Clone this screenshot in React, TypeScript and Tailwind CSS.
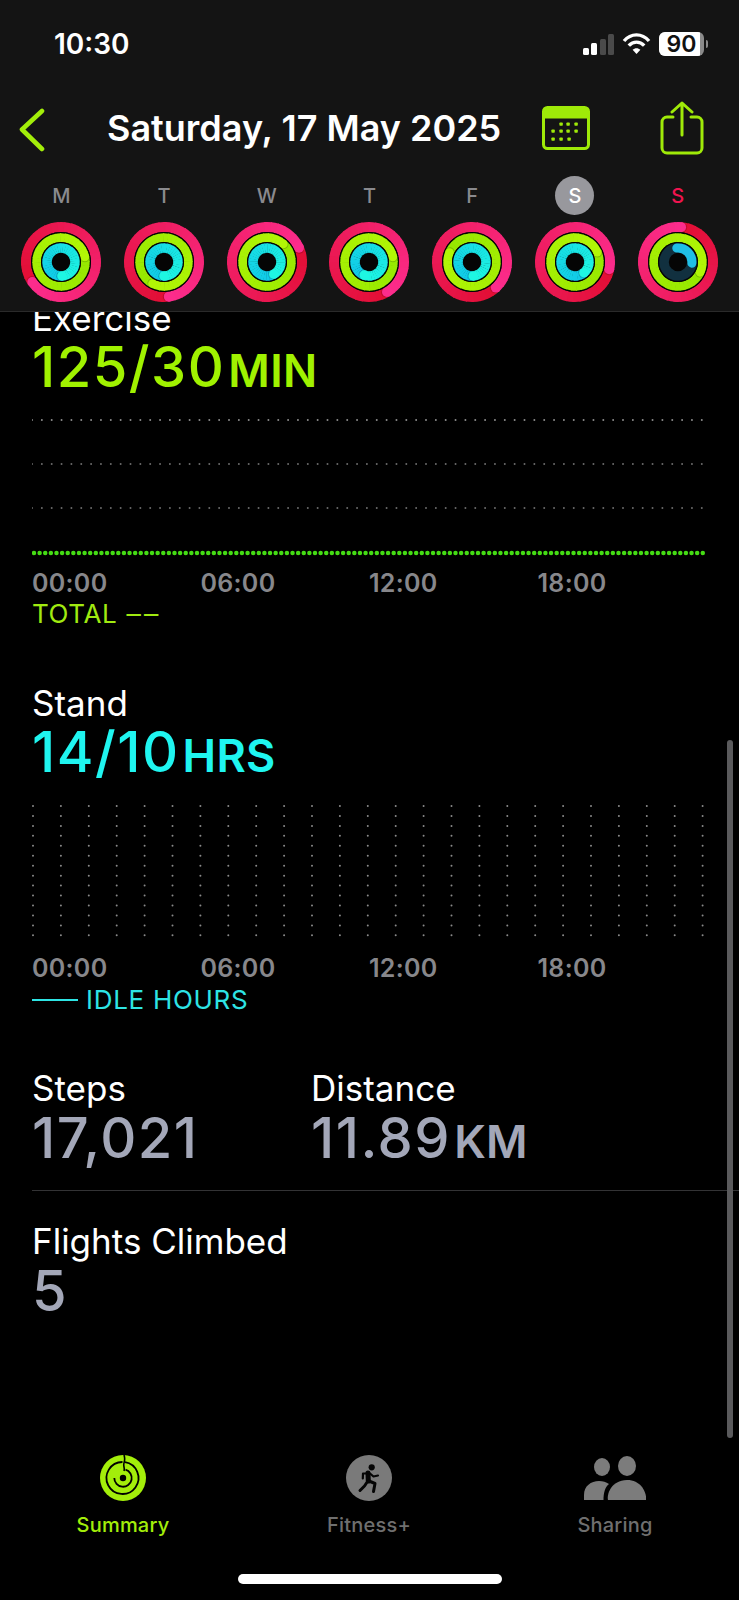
const days = [
  { label: "M", pink: 235, green: 78, blue: 176 },
  { label: "T", pink: 172, green: 208, blue: 180 },
  { label: "W", pink: 66, green: 42, blue: 151 },
  { label: "T", pink: 149, green: 78, blue: 200 },
  { label: "F", pink: 137, green: 293, blue: 175 },
  { label: "S", pink: 102, green: 66, blue: 140, today: true },
  { label: "S", pink: 5, green: 115, blue: 95, blueStart: -5, sunday: true },
];

const mix = (a: number[], b: number[], t: number) =>
  `rgb(${a.map((v, i) => Math.round(v + (b[i] - v) * t)).join(",")})`;

const point = (r: number, deg: number) => {
  const a = ((deg - 90) * Math.PI) / 180;
  return [40 + r * Math.cos(a), 40 + r * Math.sin(a)];
};

const arc = (r: number, from: number, to: number) => {
  const [x1, y1] = point(r, from);
  const [x2, y2] = point(r, to);
  return `M${x1} ${y1}A${r} ${r} 0 ${to - from > 180 ? 1 : 0} 1 ${x2} ${y2}`;
};

// full circle with a colour sweep, lightest at the head of the ring
const RingBand = ({
  r,
  width,
  head,
  from,
  to,
}: {
  r: number;
  width: number;
  head: number;
  from: number[];
  to: number[];
}) => {
  const steps = 36;
  const [hx, hy] = point(r, head);
  const [sx, sy] = point(r, head + 60 / r);
  return (
    <g>
      {Array.from({ length: steps }).map((_, i) => (
        <path
          key={i}
          d={arc(r, head + (i * 360) / steps, head + ((i + 1.15) * 360) / steps)}
          stroke={mix(from, to, i / (steps - 1))}
          strokeWidth={width}
          fill="none"
        />
      ))}
      <circle cx={sx} cy={sy} r={width / 2} fill="#000" opacity={0.16} />
      <circle cx={hx} cy={hy} r={width / 2} fill={mix(from, to, 1)} />
    </g>
  );
};

const Rings = ({
  pink,
  green,
  blue,
  blueStart,
}: {
  pink: number;
  green: number;
  blue: number;
  blueStart?: number;
}) => (
  <svg width="80" height="80" viewBox="0 0 80 80" className="block mx-auto">
    <RingBand r={35} width={10} head={pink} from={[226, 14, 52]} to={[252, 44, 140]} />
    <circle cx="40" cy="40" r="30" fill="#050505" />
    <RingBand r={24.35} width={8.7} head={green} from={[150, 232, 0]} to={[178, 246, 6]} />
    <circle cx="40" cy="40" r="20" fill="#050505" />
    {blueStart === undefined ? (
      <RingBand r={13.95} width={9.5} head={blue} from={[16, 200, 232]} to={[30, 246, 226]} />
    ) : (
      <g>
        <circle cx="40" cy="40" r="13.95" fill="none" stroke="#11303f" strokeWidth="9.5" />
        <path
          d={arc(13.95, blueStart, blue)}
          stroke="#20bfe6"
          strokeWidth="9"
          strokeLinecap="round"
          fill="none"
        />
      </g>
    )}
  </svg>
);

const Chevron = () => (
  <svg width="26" height="44" viewBox="0 0 26 44" fill="none">
    <path
      d="M23 3 3 21.5 23 41"
      stroke="#a3ee0a"
      strokeWidth="4.6"
      strokeLinecap="round"
      strokeLinejoin="round"
    />
  </svg>
);

const CalendarIcon = () => (
  <svg width="48" height="44" viewBox="0 0 48 44">
    <rect x="1.5" y="1.5" width="45" height="41" rx="4" fill="#141414" stroke="#9fea08" strokeWidth="3" />
    <path d="M1.5 12V5.5a4 4 0 0 1 4-4h37a4 4 0 0 1 4 4V12Z" fill="#9fea08" stroke="#9fea08" />
    {[
      [19, 18],
      [26, 18],
      [34, 18],
      [11, 25],
      [19, 25],
      [26, 25],
      [34, 25],
      [11, 33],
      [19, 33],
      [27, 33],
    ].map(([x, y], i) => (
      <rect key={i} x={x - 1.6} y={y - 1.6} width="3.4" height="3.4" rx="0.8" fill="#9fea08" />
    ))}
  </svg>
);

const ShareIcon = () => (
  <svg width="44" height="54" viewBox="0 0 44 54" fill="none" stroke="#9fea08" strokeWidth="3">
    <path d="M13 16H7a5 5 0 0 0-5 5v26a5 5 0 0 0 5 5h30a5 5 0 0 0 5-5V21a5 5 0 0 0-5-5h-6" strokeLinecap="round" />
    <path d="M22 34V2M12 11l10-9 10 9" strokeLinecap="round" strokeLinejoin="round" />
  </svg>
);

const Signal = () => (
  <div className="flex items-end gap-[2.5px] h-[21px]">
    <div className="w-[6px] h-[7px] rounded-[1.5px] bg-white" />
    <div className="w-[6px] h-[12px] rounded-[1.5px] bg-white" />
    <div className="w-[6px] h-[16px] rounded-[1.5px] bg-[#4a4a4a]" />
    <div className="w-[6px] h-[21px] rounded-[1.5px] bg-[#4a4a4a]" />
  </div>
);

const Wifi = () => (
  <svg width="29" height="22" viewBox="0 0 29 22" fill="none" stroke="white" strokeWidth="3.4">
    <path d="M2 8C9-.2 20-.2 27 8" />
    <path d="M6.800 12.600c4.400-4.700 11-4.700 15.400 0" />
    <path d="M14.500 21 10.600 16.800c2.200-2.200 5.600-2.200 7.800 0Z" fill="white" stroke="none" />
  </svg>
);

const Battery = () => (
  <div className="flex items-center gap-[1.5px]">
    <div className="relative w-[45px] h-[24px] rounded-[6px] overflow-hidden bg-[#8a8a8a]">
      <div className="w-[90%] h-full bg-white" />
      <span className="absolute inset-0 text-center text-[#111] text-[23px] font-semibold leading-[24px]">90</span>
    </div>
    <div className="w-[2.5px] h-[8px] rounded-r-[2px] bg-[#8a8a8a]" />
  </div>
);

const SummaryIcon = () => (
  <svg width="46" height="46" viewBox="0 0 46 46" fill="none" stroke="#000">
    <circle cx="23" cy="23" r="23" fill="#a3ee0a" stroke="none" />
    <path d="M25 7.200A16 16 0 1 1 22.500 7" strokeWidth="1.8" />
    <path d="M25.500 14.700A8.700 8.700 0 1 1 14.300 23" strokeWidth="1.8" />
    <path d="M24 0c1 3 1 5 0 8-1 3 1 5 0 8" strokeWidth="1.6" />
    <circle cx="23" cy="23" r="3.2" fill="#000" stroke="none" />
  </svg>
);

const RunnerIcon = () => (
  <svg width="46" height="46" viewBox="0 0 46 46" fill="none" stroke="#050505" strokeLinecap="round" strokeLinejoin="round">
    <circle cx="23" cy="23" r="23" fill="#7a7a7a" stroke="none" />
    <circle cx="25.700" cy="12.300" r="3.100" fill="#050505" stroke="none" />
    <path d="M22 18 22.300 26" strokeWidth="5" />
    <path d="M20.500 18.500H17L16.800 23.500" strokeWidth="2.200" />
    <path d="M24 18.500 27.500 21.500 32 20.500" strokeWidth="2.200" />
    <path d="M21.500 26.500 18.500 31 14 35.500" strokeWidth="3" />
    <path d="M23 26 29 28.500 27.500 36.500" strokeWidth="3" />
  </svg>
);

const SharingIcon = () => (
  <svg width="62" height="44" viewBox="0 0 62 44" fill="#7c7c7c">
    <ellipse cx="18" cy="11" rx="8" ry="9" />
    <ellipse cx="43" cy="10" rx="9" ry="10" />
    <path d="M0 44v-5c0-9 7-14 15-14 4 0 7 1 10 3-4 3-5.500 9-5.500 16Z" />
    <path d="M24 44c-1-2 0-19 19-20 17 0 20 17 19 20Z" />
  </svg>
);

const Axis = () => (
  <div className="grid grid-cols-4 w-[674px] text-[25px] leading-[30px] font-semibold tracking-[0.3px] text-[#87878b]">
    <span>00:00</span>
    <span>06:00</span>
    <span>12:00</span>
    <span>18:00</span>
  </div>
);

const ExerciseChart = () => (
  <svg width="680" height="173" viewBox="0 0 680 173" className="block">
    {[25, 69, 113].map((y, i) => (
      <line
        key={y}
        x1="0"
        x2="674"
        y1={y}
        y2={y}
        stroke={i === 0 ? "#8c8c8c" : "#6a6a6a"}
        strokeWidth="2"
        strokeLinecap="round"
        strokeDasharray="0 9.85"
      />
    ))}
    <line
      x1="2"
      x2="673"
      y1="158"
      y2="158"
      stroke="#45dc14"
      strokeWidth="4.5"
      strokeLinecap="round"
      strokeDasharray="0 5.62"
    />
  </svg>
);

const StandChart = () => (
  <svg width="680" height="173" viewBox="0 0 680 173" className="block">
    {Array.from({ length: 25 }).map((_, i) => (
      <line
        key={i}
        x1={1 + i * 27.9}
        x2={1 + i * 27.9}
        y1="26"
        y2="156"
        stroke="#8a8a8a"
        strokeWidth="2"
        strokeLinecap="round"
        strokeDasharray="0 9.95"
      />
    ))}
  </svg>
);

const Value = ({ value, unit, className }: { value: string; unit?: string; className: string }) => (
  <div className={`text-[56px] leading-[56px] font-medium tracking-[1.5px] ${className}`}>
    {value}
    {unit && <span className="text-[45px] leading-[0] font-semibold tracking-[0.3px] ml-[3px]">{unit}</span>}
  </div>
);

const Label = ({ children }: { children: string }) => (
  <div className="text-[35px] leading-[40px] text-white">{children}</div>
);

const Tab = ({
  icon,
  label,
  className,
}: {
  icon: React.ReactNode;
  label: string;
  className: string;
}) => (
  <div className="flex flex-col items-center w-[246px]">
    <div className="h-[46px] flex items-center justify-center">{icon}</div>
    <span className={`mt-[7px] text-[20px] leading-[34px] font-medium tracking-[0.2px] ${className}`}>{label}</span>
  </div>
);

export default function App() {
  return (
    <div className="relative w-[739px] h-[1600px] flex flex-col bg-black overflow-hidden font-[Inter,sans-serif]">
      <header className="z-10 h-[312px] shrink-0 bg-[#141414] border-b border-[#2a2a2a]">
        <div className="h-[86px] flex items-center justify-between pl-[54px] pr-[31px] pt-[2px]">
          <span className="text-white text-[28px] font-semibold">10:30</span>
          <div className="flex items-center gap-[8px]">
            <Signal />
            <Wifi />
            <Battery />
          </div>
        </div>
        <div className="h-[84px] flex items-center pl-[19px]">
          <div className="mt-[4px]">
            <Chevron />
          </div>
          <h1 className="ml-[62px] w-[435px] text-white text-[36px] leading-[44px] font-semibold whitespace-nowrap">
            Saturday, 17 May 2025
          </h1>
          <CalendarIcon />
          <div className="ml-[70px]">
            <ShareIcon />
          </div>
        </div>
        <div className="grid grid-cols-7 px-[10px] pt-[2px]">
          {days.map((d, i) => (
            <div key={i} className="flex flex-col items-center">
              <div
                className={`w-[39px] h-[39px] mt-[4px] rounded-full flex items-center justify-center text-[20px] font-medium ${
                  d.today ? "bg-[#98989d] text-white" : d.sunday ? "text-[#f0144f]" : "text-[#8a8a8e]"
                }`}
              >
                {d.label}
              </div>
              <div className="mt-[7px]">
                <Rings pink={d.pink} green={d.green} blue={d.blue} blueStart={d.blueStart} />
              </div>
            </div>
          ))}
        </div>
      </header>

      <main className="relative flex-1 overflow-hidden pl-[32px]">
        <div className="-mt-[14px]">
          <Label>Exercise</Label>
          <Value value="125/30" unit="MIN" className="mt-px text-[#a0f200]" />
          <ExerciseChart />
          <Axis />
          <div className="mt-[1px] text-[26px] leading-[30px] tracking-[0.6px] text-[#a0ea10]">TOTAL ‒‒</div>
        </div>

        <div className="mt-[54px]">
          <Label>Stand</Label>
          <Value value="14/10" unit="HRS" className="mt-px text-[#1ff5f0]" />
          <StandChart />
          <Axis />
          <div className="mt-[2px] flex items-center text-[26px] leading-[30px] tracking-[0.7px] text-[#2ee4e4]">
            <span className="w-[46px] h-[2px] bg-[#2ee4e4] mr-[8px]" />
            IDLE HOURS
          </div>
        </div>

        <div className="mt-[53px] flex">
          <div className="w-[279px]">
            <Label>Steps</Label>
            <Value value="17,021" className="mt-[2px] text-[#a3a7b8]" />
          </div>
          <div>
            <Label>Distance</Label>
            <Value value="11.89" unit="KM" className="mt-[2px] text-[#a3a7b8]" />
          </div>
        </div>
        <div className="mt-[24px] h-px bg-[#333335]" />
        <div className="mt-[30px]">
          <Label>Flights Climbed</Label>
          <Value value="5" className="mt-[2px] text-[#a3a7b8]" />
        </div>

        <div className="absolute right-[6px] top-[428px] w-[6px] h-[698px] rounded-full bg-[#5a5a5c]" />
      </main>

      <footer className="h-[150px] shrink-0 relative">
        <div className="flex pt-[5px]">
          <Tab icon={<SummaryIcon />} label="Summary" className="text-[#a3ee0a]" />
          <Tab icon={<RunnerIcon />} label="Fitness+" className="text-[#6f6f6f]" />
          <Tab icon={<SharingIcon />} label="Sharing" className="text-[#6f6f6f]" />
        </div>
        <div className="absolute left-[238px] top-[124px] w-[264px] h-[10px] rounded-full bg-white" />
      </footer>
    </div>
  );
}
